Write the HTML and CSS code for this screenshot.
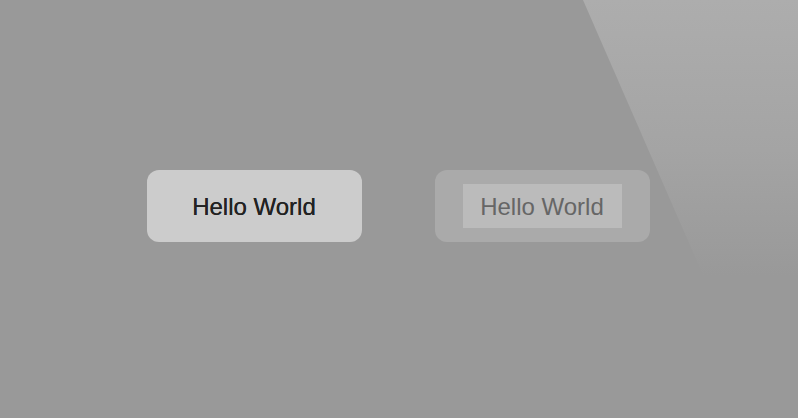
FILE: index.html
```html
<!DOCTYPE html>
<html>
<head>
<meta charset="utf-8">
<link rel="stylesheet" href="styles.css">
</head>
<body>
<div class="stage">
  <div class="row">
    <button class="btn btn-normal">Hello World</button>
    <button class="btn btn-disabled"><span class="inner">Hello World</span></button>
  </div>
</div>
</body>
</html>
```

FILE: styles.css
```css
html, body {
  margin: 0;
  padding: 0;
  width: 798px;
  height: 418px;
  overflow: hidden;
  background: #999999;
  font-family: "Liberation Sans", Arial, sans-serif;
}
.stage {
  position: relative;
  width: 798px;
  height: 418px;
  display: flex;
  justify-content: center;
  padding-top: 170px;
  padding-right: 2px;
  box-sizing: border-box;
}
.stage::before {
  content: "";
  position: absolute;
  left: 0;
  top: 0;
  width: 798px;
  height: 418px;
  background: linear-gradient(to bottom, #adadad 0px, #a4a4a4 150px, #999999 275px);
  clip-path: polygon(583px 0, 798px 0, 798px 418px, 703px 275px);
  z-index: 0;
}
.row {
  position: relative;
  z-index: 1;
  display: flex;
  gap: 73px;
  align-items: flex-start;
  height: 72px;
}
.btn {
  width: 215px;
  height: 72px;
  border: none;
  border-radius: 12px;
  font-family: "Liberation Sans", Arial, sans-serif;
  font-size: 24px;
  padding: 2px 0 0 0;
  box-sizing: border-box;
  display: flex;
  align-items: center;
  justify-content: center;
}
.btn-normal {
  background: #cccccc;
  color: #222222;
  text-shadow: 0 0 0.4px #222222;
}
.btn-disabled {
  background: #aaaaaa;
  color: #666666;
  padding-top: 0;
}
.inner {
  background: #bbbbbb;
  width: 159px;
  height: 44px;
  padding-top: 2px;
  box-sizing: border-box;
  display: flex;
  align-items: center;
  justify-content: center;
}
```
